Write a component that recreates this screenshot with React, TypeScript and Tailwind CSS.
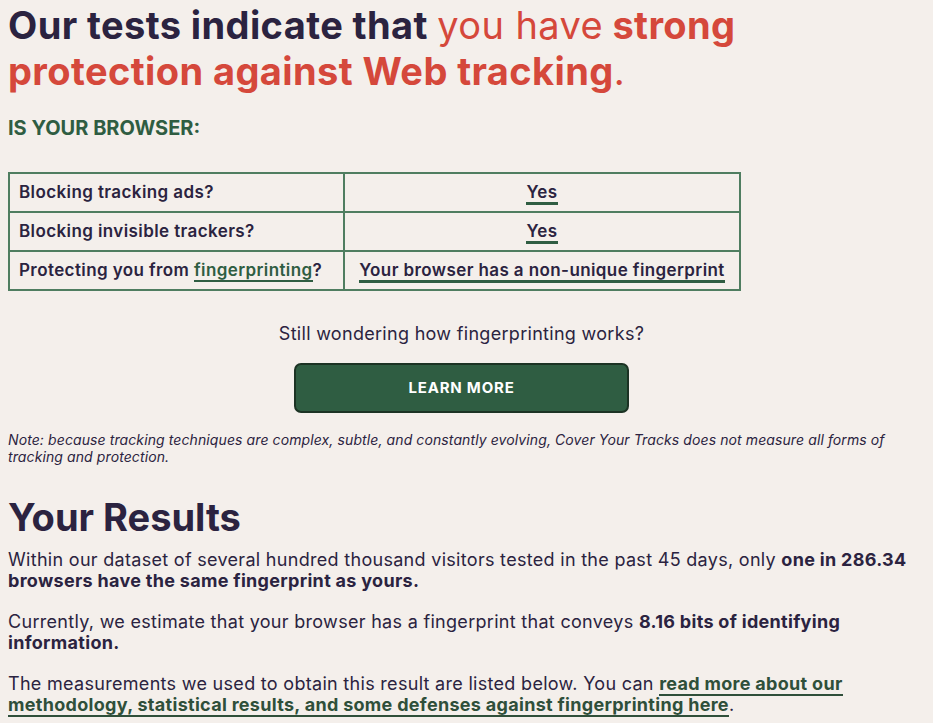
import React from 'react'

const rows = [
  { q: 'Blocking tracking ads?', a: 'Yes' },
  { q: 'Blocking invisible trackers?', a: 'Yes' },
]

export default function App() {
  return (
    <div className="min-h-[723px] bg-[#f4efeb] text-[#2b2340] font-['Inter',sans-serif]">
      <div className="pl-[8px] pr-[18px] pt-[2px]">
        <h1 className="text-[38px] leading-[46px] font-bold tracking-[0.4px]">
          Our tests indicate that <span className="font-normal text-[#d5483b]">you have</span>{' '}
          <span className="text-[#d5483b]">strong protection against Web tracking</span>
          <span className="font-normal text-[#d5483b]">.</span>
        </h1>

        <h2 className="mt-[21px] text-[20px] leading-[26px] font-bold uppercase text-[#2f5d42]">Is your browser:</h2>

        <table className="mt-[31px] w-[733px] border-collapse border-2 border-[#4f7d60] text-[17px] font-semibold tracking-[0.4px]">
          <tbody>
            {rows.map((r) => (
              <tr key={r.q} className="h-[39px]">
                <td className="border-2 border-[#4f7d60] px-[9px] w-[335px]">{r.q}</td>
                <td className="border-2 border-[#4f7d60] text-center">
                  <span className="border-b-[3px] border-[#2f5d42]">{r.a}</span>
                </td>
              </tr>
            ))}
            <tr className="h-[39px]">
              <td className="border-2 border-[#4f7d60] px-[9px]">
                Protecting you from{' '}
                <span className="text-[#2f5d42] border-b-2 border-[#2f5d42]">fingerprinting</span>?
              </td>
              <td className="border-2 border-[#4f7d60] text-center">
                <span className="border-b-[3px] border-[#2f5d42]">Your browser has a non-unique fingerprint</span>
              </td>
            </tr>
          </tbody>
        </table>

        <div className="flex flex-col items-center">
          <p className="mt-[32px] text-[18px] leading-[22px] tracking-[0.3px]">Still wondering how fingerprinting works?</p>
          <button className="mt-[18px] w-[335px] h-[50px] rounded-[7px] bg-[#2f5d42] border-2 border-[#1c3324] text-white text-[15px] font-bold tracking-[0.8px]">
            LEARN MORE
          </button>
        </div>

        <p className="mt-[18px] text-[14px] leading-[17px] italic tracking-[0.1px]">
          Note: because tracking techniques are complex, subtle, and constantly evolving, Cover Your Tracks does not
          measure all forms of tracking and protection.
        </p>

        <h2 className="mt-[29px] text-[38px] leading-[46px] font-bold">Your Results</h2>

        <div className="text-[18px] leading-[21px] tracking-[0.3px]">
          <p className="mt-[9px]">
            Within our dataset of several hundred thousand visitors tested in the past 45 days, only{' '}
            <b>one in 286.34 browsers have the same fingerprint as yours.</b>
          </p>
          <p className="mt-[20px]">
            Currently, we estimate that your browser has a fingerprint that conveys{' '}
            <b>8.16 bits of identifying information.</b>
          </p>
          <p className="mt-[20px]">
            The measurements we used to obtain this result are listed below. You can{' '}
            <a className="font-bold text-[#2f4f3a] border-b-2 border-[#2f4f3a]">
              read more about our methodology, statistical results, and some defenses against fingerprinting here
            </a>
            .
          </p>
        </div>
      </div>
    </div>
  )
}
